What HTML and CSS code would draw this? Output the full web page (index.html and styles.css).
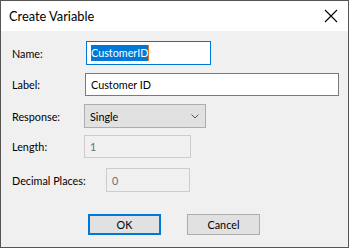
FILE: index.html
```html
<!DOCTYPE html>
<html>
<head>
  <link rel="stylesheet" href="styles.css">
</head>
<body>
  <div class="window">
    <div class="titlebar">
      <span class="title">Create Variable</span>
      <svg class="close" width="14" height="14" viewBox="0 0 14 14">
        <path d="M1 1 L13 13 M13 1 L1 13" stroke="#000" stroke-width="1.1" fill="none"/>
      </svg>
    </div>
    <div class="content">
      <div class="row row-name">
        <span class="lbl">Name:</span>
        <div class="field focus"><span class="sel">CustomerID</span><span class="caret"></span></div>
      </div>
      <div class="row row-label">
        <span class="lbl">Label:</span>
        <div class="field">Customer ID</div>
      </div>
      <div class="row row-resp">
        <span class="lbl">Response:</span>
        <div class="field combo">
          <span>Single</span>
          <svg width="8" height="5" viewBox="0 0 8 5">
            <path d="M0.5 0.5 L4 4 L7.5 0.5" stroke="#555" stroke-width="1" fill="none"/>
          </svg>
        </div>
      </div>
      <div class="row row-len">
        <span class="lbl">Length:</span>
        <div class="field disabled">1</div>
      </div>
      <div class="row row-dec">
        <span class="lbl">Decimal Places:</span>
        <div class="field disabled">0</div>
      </div>
      <div class="buttons">
        <button class="btn default">OK</button>
        <button class="btn">Cancel</button>
      </div>
    </div>
  </div>
</body>
</html>
```

FILE: styles.css
```css
body {
  margin: 0;
  font-family: Lato, "Noto Sans", sans-serif;
  font-size: 10.8px;
  color: #000;
}

.window {
  width: 349px;
  height: 248px;
  box-sizing: border-box;
  border: 1px solid #555;
  background-color: #f0f0f0;
}

.titlebar {
  height: 30px;
  background-color: #fff;
  display: flex;
  align-items: center;
  justify-content: space-between;
  padding: 0 10px 0 8px;
}
.title {
  font-size: 12.8px;
}

.content {
  padding-top: 10px;
}

.row {
  display: flex;
  align-items: center;
  padding-left: 11px;
  margin-bottom: 8px;
}
.lbl {
  width: 73px;
}

.field {
  box-sizing: border-box;
  border: 1px solid #7a7a7a;
  background-color: #fff;
  display: flex;
  align-items: center;
  padding-left: 5px;
}

.row-name .field {
  width: 125px;
  height: 24px;
  margin-left: 1px;
  padding-left: 4px;
}
.focus {
  border-color: #0078d7 !important;
}
.sel {
  background-color: #0078d7;
  color: #fff;
  line-height: 16px;
}
.caret {
  width: 1px;
  height: 16px;
  background-color: #e8792a;
}

.row-label .field {
  width: 254px;
  height: 23px;
}

.row-resp .field {
  width: 122px;
  height: 24px;
  margin-left: -1px;
  background-color: #e1e1e1;
  border-color: #adadad;
  justify-content: space-between;
  padding-right: 6px;
}
.row-resp {
  margin-bottom: 7px;
}

.disabled {
  background-color: #f0f0f0;
  border-color: #ccc;
  color: #6d6d6d;
}
.row-len .field {
  width: 107px;
  height: 23px;
  margin-left: -1px;
}
.row-len {
  margin-bottom: 10px;
}
.row-dec .lbl {
  width: 94px;
}
.row-dec .field {
  width: 84px;
  height: 24px;
  margin-left: 0;
}

.buttons {
  display: flex;
  gap: 26px;
  padding-left: 87px;
  margin-top: 22px;
}
.btn {
  box-sizing: border-box;
  width: 73px;
  height: 21px;
  background-color: #e1e1e1;
  border: 1px solid #adadad;
  font-family: inherit;
  font-size: 10.8px;
  padding: 0;
  color: #000;
}
.default {
  border: 2px solid #0078d7;
}
```
